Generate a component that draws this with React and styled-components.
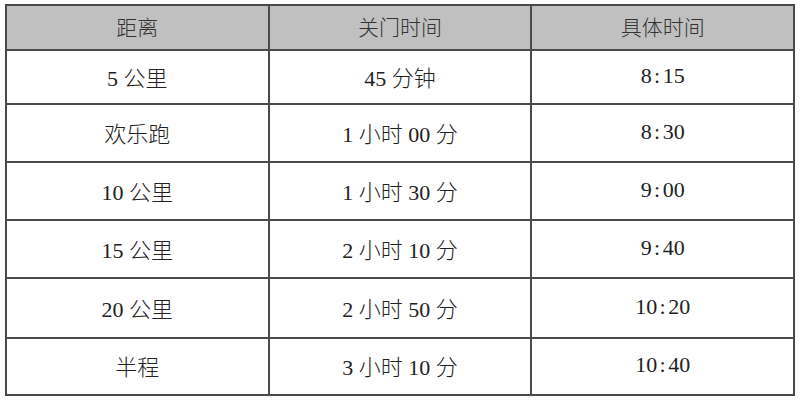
import React from "react";
import styled, { createGlobalStyle } from "styled-components";

const Global = createGlobalStyle`
  html, body { margin: 0; padding: 0; background: #ffffff; }
  body { width: 800px; height: 400px; overflow: hidden; }
`;

const Page = styled.div`
  padding: 4px 5px 0 5px;
`;

const Table = styled.table`
  width: 790px;
  border-collapse: collapse;
  table-layout: fixed;
  border: 2px solid #2e2e2e;
  font-family: "Liberation Serif", "Noto Sans CJK SC", serif;
  font-size: 22px;
  font-weight: 300;
  color: #222222;
`;

const HeadRow = styled.tr`
  height: 45px;
  background: #c0c0c0;
`;

const Row = styled.tr`
  height: ${(p) => p.$h}px;
`;

const Th = styled.th`
  font-weight: 300;
  text-align: center;
  vertical-align: middle;
  padding: 0 0 3px 0;
  border: 2px solid #4a4a4a;
  font-family: "Noto Sans CJK SC", sans-serif;
  font-size: 21px;
  color: #333333;
`;

const Td = styled.td`
  text-align: center;
  vertical-align: middle;
  padding: 0 0 3px 0;
  border: 2px solid #4a4a4a;
`;

const Colon = styled.span`
  display: inline-block;
  width: 0.5em;
  text-align: center;
`;

const rows = [
  ["5 公里", "45 分钟", "8:15", 54],
  ["欢乐跑", "1 小时 00 分", "8:30", 58],
  ["10 公里", "1 小时 30 分", "9:00", 58],
  ["15 公里", "2 小时 10 分", "9:40", 58],
  ["20 公里", "2 小时 50 分", "10:20", 60],
  ["半程", "3 小时 10 分", "10:40", 57],
];

function Time({ value }) {
  const [h, m] = value.split(":");
  return (
    <>
      {h}
      <Colon>:</Colon>
      {m}
    </>
  );
}

export default function App() {
  return (
    <>
      <Global />
      <Page>
        <Table>
          <thead>
            <HeadRow>
              <Th>距离</Th>
              <Th>关门时间</Th>
              <Th>具体时间</Th>
            </HeadRow>
          </thead>
          <tbody>
            {rows.map(([d, c, t, h]) => (
              <Row key={d} $h={h}>
                <Td>{d}</Td>
                <Td>{c}</Td>
                <Td>
                  <Time value={t} />
                </Td>
              </Row>
            ))}
          </tbody>
        </Table>
      </Page>
    </>
  );
}
